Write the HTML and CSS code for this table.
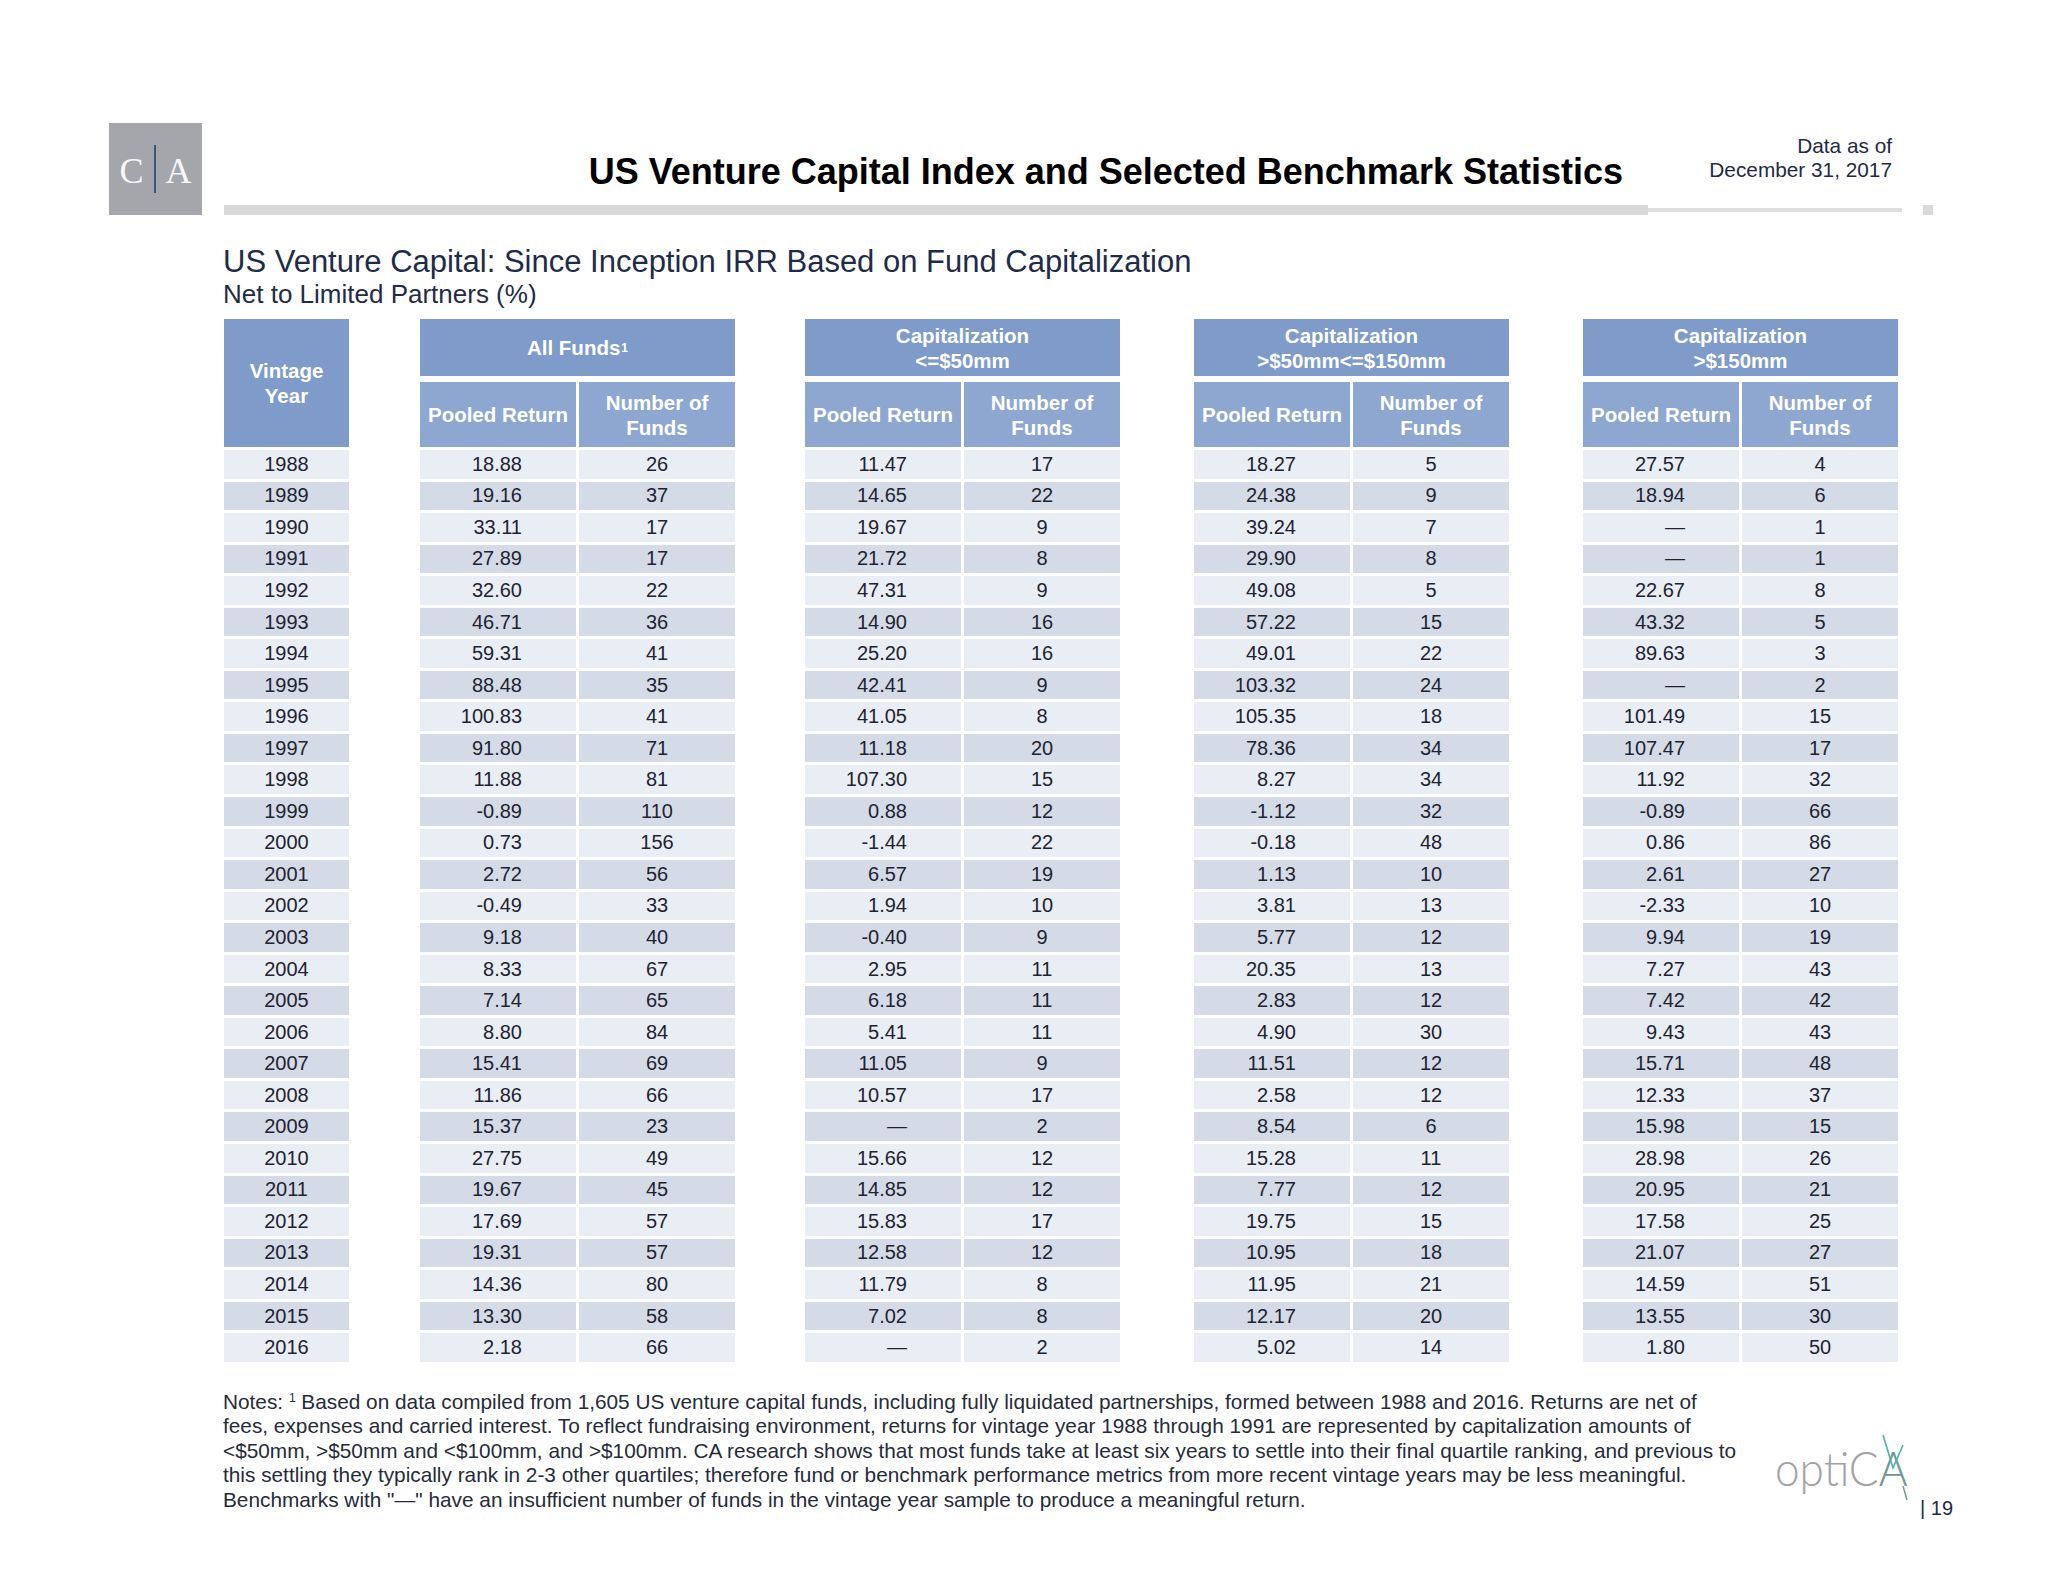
FILE: index.html
```html
<!DOCTYPE html>
<html>
<head>
<meta charset="utf-8">
<link rel="stylesheet" href="styles.css">
</head>
<body>
<div class="page">
  <div class="header">
    <div class="calogo"><span class="l">C</span><span class="sep"></span><span class="l">A</span></div>
    <div class="hmain">
      <div class="htop">
        <div class="title">US Venture Capital Index and Selected Benchmark Statistics</div>
        <div class="asof">Data as of<br>December 31, 2017</div>
      </div>
      <div class="bar"><div class="thick"></div><div class="thin"></div><div class="sq"></div></div>
    </div>
  </div>

  <div class="content">
    <h1 class="subtitle">US Venture Capital: Since Inception IRR Based on Fund Capitalization</h1>
    <h2 class="subsub">Net to Limited Partners (%)</h2>

    <div class="tbl">
      <div class="vh">Vintage<br>Year</div>
      <div class="gh g1">All Funds<sup>1</sup></div>
      <div class="gh g2">Capitalization<br>&lt;=$50mm</div>
      <div class="gh g3">Capitalization<br>&gt;$50mm&lt;=$150mm</div>
      <div class="gh g4">Capitalization<br>&gt;$150mm</div>
      <div class="sh c3">Pooled Return</div><div class="sh c4">Number of<br>Funds</div>
      <div class="sh c6">Pooled Return</div><div class="sh c7">Number of<br>Funds</div>
      <div class="sh c9">Pooled Return</div><div class="sh c10">Number of<br>Funds</div>
      <div class="sh c12">Pooled Return</div><div class="sh c13">Number of<br>Funds</div>

      <div class="r"><div>1988</div><div>18.88</div><div>26</div><div>11.47</div><div>17</div><div>18.27</div><div>5</div><div>27.57</div><div>4</div></div>
      <div class="r alt"><div>1989</div><div>19.16</div><div>37</div><div>14.65</div><div>22</div><div>24.38</div><div>9</div><div>18.94</div><div>6</div></div>
      <div class="r"><div>1990</div><div>33.11</div><div>17</div><div>19.67</div><div>9</div><div>39.24</div><div>7</div><div>—</div><div>1</div></div>
      <div class="r alt"><div>1991</div><div>27.89</div><div>17</div><div>21.72</div><div>8</div><div>29.90</div><div>8</div><div>—</div><div>1</div></div>
      <div class="r"><div>1992</div><div>32.60</div><div>22</div><div>47.31</div><div>9</div><div>49.08</div><div>5</div><div>22.67</div><div>8</div></div>
      <div class="r alt"><div>1993</div><div>46.71</div><div>36</div><div>14.90</div><div>16</div><div>57.22</div><div>15</div><div>43.32</div><div>5</div></div>
      <div class="r"><div>1994</div><div>59.31</div><div>41</div><div>25.20</div><div>16</div><div>49.01</div><div>22</div><div>89.63</div><div>3</div></div>
      <div class="r alt"><div>1995</div><div>88.48</div><div>35</div><div>42.41</div><div>9</div><div>103.32</div><div>24</div><div>—</div><div>2</div></div>
      <div class="r"><div>1996</div><div>100.83</div><div>41</div><div>41.05</div><div>8</div><div>105.35</div><div>18</div><div>101.49</div><div>15</div></div>
      <div class="r alt"><div>1997</div><div>91.80</div><div>71</div><div>11.18</div><div>20</div><div>78.36</div><div>34</div><div>107.47</div><div>17</div></div>
      <div class="r"><div>1998</div><div>11.88</div><div>81</div><div>107.30</div><div>15</div><div>8.27</div><div>34</div><div>11.92</div><div>32</div></div>
      <div class="r alt"><div>1999</div><div>-0.89</div><div>110</div><div>0.88</div><div>12</div><div>-1.12</div><div>32</div><div>-0.89</div><div>66</div></div>
      <div class="r"><div>2000</div><div>0.73</div><div>156</div><div>-1.44</div><div>22</div><div>-0.18</div><div>48</div><div>0.86</div><div>86</div></div>
      <div class="r alt"><div>2001</div><div>2.72</div><div>56</div><div>6.57</div><div>19</div><div>1.13</div><div>10</div><div>2.61</div><div>27</div></div>
      <div class="r"><div>2002</div><div>-0.49</div><div>33</div><div>1.94</div><div>10</div><div>3.81</div><div>13</div><div>-2.33</div><div>10</div></div>
      <div class="r alt"><div>2003</div><div>9.18</div><div>40</div><div>-0.40</div><div>9</div><div>5.77</div><div>12</div><div>9.94</div><div>19</div></div>
      <div class="r"><div>2004</div><div>8.33</div><div>67</div><div>2.95</div><div>11</div><div>20.35</div><div>13</div><div>7.27</div><div>43</div></div>
      <div class="r alt"><div>2005</div><div>7.14</div><div>65</div><div>6.18</div><div>11</div><div>2.83</div><div>12</div><div>7.42</div><div>42</div></div>
      <div class="r"><div>2006</div><div>8.80</div><div>84</div><div>5.41</div><div>11</div><div>4.90</div><div>30</div><div>9.43</div><div>43</div></div>
      <div class="r alt"><div>2007</div><div>15.41</div><div>69</div><div>11.05</div><div>9</div><div>11.51</div><div>12</div><div>15.71</div><div>48</div></div>
      <div class="r"><div>2008</div><div>11.86</div><div>66</div><div>10.57</div><div>17</div><div>2.58</div><div>12</div><div>12.33</div><div>37</div></div>
      <div class="r alt"><div>2009</div><div>15.37</div><div>23</div><div>—</div><div>2</div><div>8.54</div><div>6</div><div>15.98</div><div>15</div></div>
      <div class="r"><div>2010</div><div>27.75</div><div>49</div><div>15.66</div><div>12</div><div>15.28</div><div>11</div><div>28.98</div><div>26</div></div>
      <div class="r alt"><div>2011</div><div>19.67</div><div>45</div><div>14.85</div><div>12</div><div>7.77</div><div>12</div><div>20.95</div><div>21</div></div>
      <div class="r"><div>2012</div><div>17.69</div><div>57</div><div>15.83</div><div>17</div><div>19.75</div><div>15</div><div>17.58</div><div>25</div></div>
      <div class="r alt"><div>2013</div><div>19.31</div><div>57</div><div>12.58</div><div>12</div><div>10.95</div><div>18</div><div>21.07</div><div>27</div></div>
      <div class="r"><div>2014</div><div>14.36</div><div>80</div><div>11.79</div><div>8</div><div>11.95</div><div>21</div><div>14.59</div><div>51</div></div>
      <div class="r alt"><div>2015</div><div>13.30</div><div>58</div><div>7.02</div><div>8</div><div>12.17</div><div>20</div><div>13.55</div><div>30</div></div>
      <div class="r"><div>2016</div><div>2.18</div><div>66</div><div>—</div><div>2</div><div>5.02</div><div>14</div><div>1.80</div><div>50</div></div>
    </div>

    <div class="foot">
      <p class="notes">Notes: <sup>1</sup> Based on data compiled from 1,605 US venture capital funds, including fully liquidated partnerships, formed between 1988 and 2016. Returns are net of<br>fees, expenses and carried interest. To reflect fundraising environment, returns for vintage year 1988 through 1991 are represented by capitalization amounts of<br>&lt;$50mm, &gt;$50mm and &lt;$100mm, and &gt;$100mm. CA research shows that most funds take at least six years to settle into their final quartile ranking, and previous to<br>this settling they typically rank in 2-3 other quartiles; therefore fund or benchmark performance metrics from more recent vintage years may be less meaningful.<br>Benchmarks with "—" have an insufficient number of funds in the vintage year sample to produce a meaningful return.</p>
      <div class="brand">
        <svg class="optica" width="140" height="80" viewBox="0 0 140 80">
          <text x="1" y="58" class="opt" transform="scale(0.92 1)">optiC<tspan class="oa">A</tspan></text>
          <polyline points="109,7 119,40 129,17" fill="none" stroke="#4fb2a7" stroke-width="1.6"/>
          <line x1="129" y1="58" x2="133" y2="72" stroke="#6f9794" stroke-width="1.4"/>
        </svg>
        <span class="pno">| 19</span>
      </div>
    </div>
  </div>
</div>
</body>
</html>
```

FILE: styles.css
```css
html, body {
  margin: 0;
  padding: 0;
  background: #ffffff;
}
body {
  width: 2048px;
  height: 1582px;
  overflow: hidden;
  font-family: "Liberation Sans", Arial, sans-serif;
  color: #1f2433;
}
.page {
  padding: 123px 0 0 109px;
}

/* header */
.header {
  display: flex;
  align-items: flex-start;
}
.calogo {
  width: 93px;
  height: 92px;
  background: #a4a6ab;
  display: flex;
  align-items: center;
  justify-content: center;
  gap: 10px;
}
.calogo .l {
  font-family: "Liberation Serif", "DejaVu Serif", serif;
  font-size: 36px;
  line-height: 36px;
  color: #f7f7f7;
  padding-top: 4px;
}
.calogo .sep {
  width: 2px;
  height: 48px;
  background: #3e5778;
}
.hmain {
  margin-left: 22px;
  width: 1711px;
}
.htop {
  height: 82px;
  display: flex;
  justify-content: flex-end;
  align-items: flex-start;
}
.title {
  font-size: 36px;
  line-height: 40px;
  font-weight: bold;
  color: #000000;
  white-space: nowrap;
  margin-top: 29px;
  margin-right: 45px;
}
.asof {
  width: 224px;
  text-align: right;
  font-size: 20.8px;
  line-height: 24px;
  color: #1f2a44;
  margin-top: 11px;
  margin-right: 43px;
}
.bar {
  display: flex;
  align-items: center;
  height: 10px;
}
.bar .thick {
  width: 1424px;
  height: 10px;
  background: #d9d9d9;
}
.bar .thin {
  width: 254px;
  height: 4px;
  background: #dfdfdf;
}
.bar .sq {
  width: 10px;
  height: 10px;
  background: #dadada;
  margin-left: 21px;
}

/* content */
.content {
  margin-left: 114px;
}
.subtitle {
  margin: 29px 0 0 0;
  font-size: 31px;
  line-height: 35px;
  font-weight: normal;
  color: #1f2b47;
}
.subsub {
  margin: 1px 0 0 0;
  font-size: 26px;
  line-height: 28px;
  font-weight: normal;
  color: #1f2b47;
}

/* table */
.tbl {
  margin: 11px 0 0 1px;
  display: grid;
  grid-template-columns: 125px 65px 156px 156px 64px 156px 156px 68px 156px 156px 68px 156px 156px;
  grid-template-rows: 60px 65px;
  grid-auto-rows: 28.55px;
  column-gap: 3px;
  row-gap: 3px;
}
.vh, .gh, .sh {
  color: #ffffff;
  font-weight: bold;
  font-size: 20.5px;
  line-height: 25px;
  display: flex;
  align-items: center;
  justify-content: center;
  text-align: center;
}
.vh {
  grid-column: 1;
  grid-row: 1 / span 2;
  background: #7f9bc9;
}
.gh {
  grid-row: 1;
  height: 57px;
  background: #7f9bc9;
}
.gh sup {
  font-size: 12px;
  line-height: 0;
  vertical-align: 7px;
  margin-left: 1px;
}
.g1 { grid-column: 3 / span 2; }
.g2 { grid-column: 6 / span 2; }
.g3 { grid-column: 9 / span 2; }
.g4 { grid-column: 12 / span 2; }
.sh {
  grid-row: 2;
  background: #8ea7d1;
}
.c3 { grid-column: 3; }
.c4 { grid-column: 4; }
.c6 { grid-column: 6; }
.c7 { grid-column: 7; }
.c9 { grid-column: 9; }
.c10 { grid-column: 10; }
.c12 { grid-column: 12; }
.c13 { grid-column: 13; }

.r {
  display: contents;
}
.r > div {
  background: #e9edf4;
  font-size: 20px;
  color: #1f2330;
  display: flex;
  align-items: center;
  justify-content: center;
}
.r.alt > div {
  background: #d4dbe7;
}
.r > div:nth-child(even) {
  justify-content: flex-end;
  padding-right: 54px;
}
.r > div:nth-child(1) { grid-column: 1; }
.r > div:nth-child(2) { grid-column: 3; }
.r > div:nth-child(4) { grid-column: 6; }
.r > div:nth-child(6) { grid-column: 9; }
.r > div:nth-child(8) { grid-column: 12; }

/* footer */
.foot {
  display: flex;
  align-items: flex-start;
  margin-top: 28px;
}
.notes {
  margin: 0;
  width: 1530px;
  font-size: 20.8px;
  line-height: 24.5px;
  color: #262b38;
  white-space: nowrap;
}
.notes sup {
  font-size: 12px;
  line-height: 0;
  vertical-align: 7px;
}
.brand {
  display: flex;
  align-items: flex-start;
  margin-top: 38px;
  margin-left: 21px;
}
.optica .opt {
  font-family: Lato, "Open Sans", sans-serif;
  font-weight: 300;
  font-size: 48px;
  fill: #a3a3a3;
}
.optica .oa {
  fill: #6f9794;
}
.pno {
  font-size: 20px;
  line-height: 24px;
  color: #1f2a44;
  margin-top: 68px;
  margin-left: 6px;
  white-space: nowrap;
}
```
